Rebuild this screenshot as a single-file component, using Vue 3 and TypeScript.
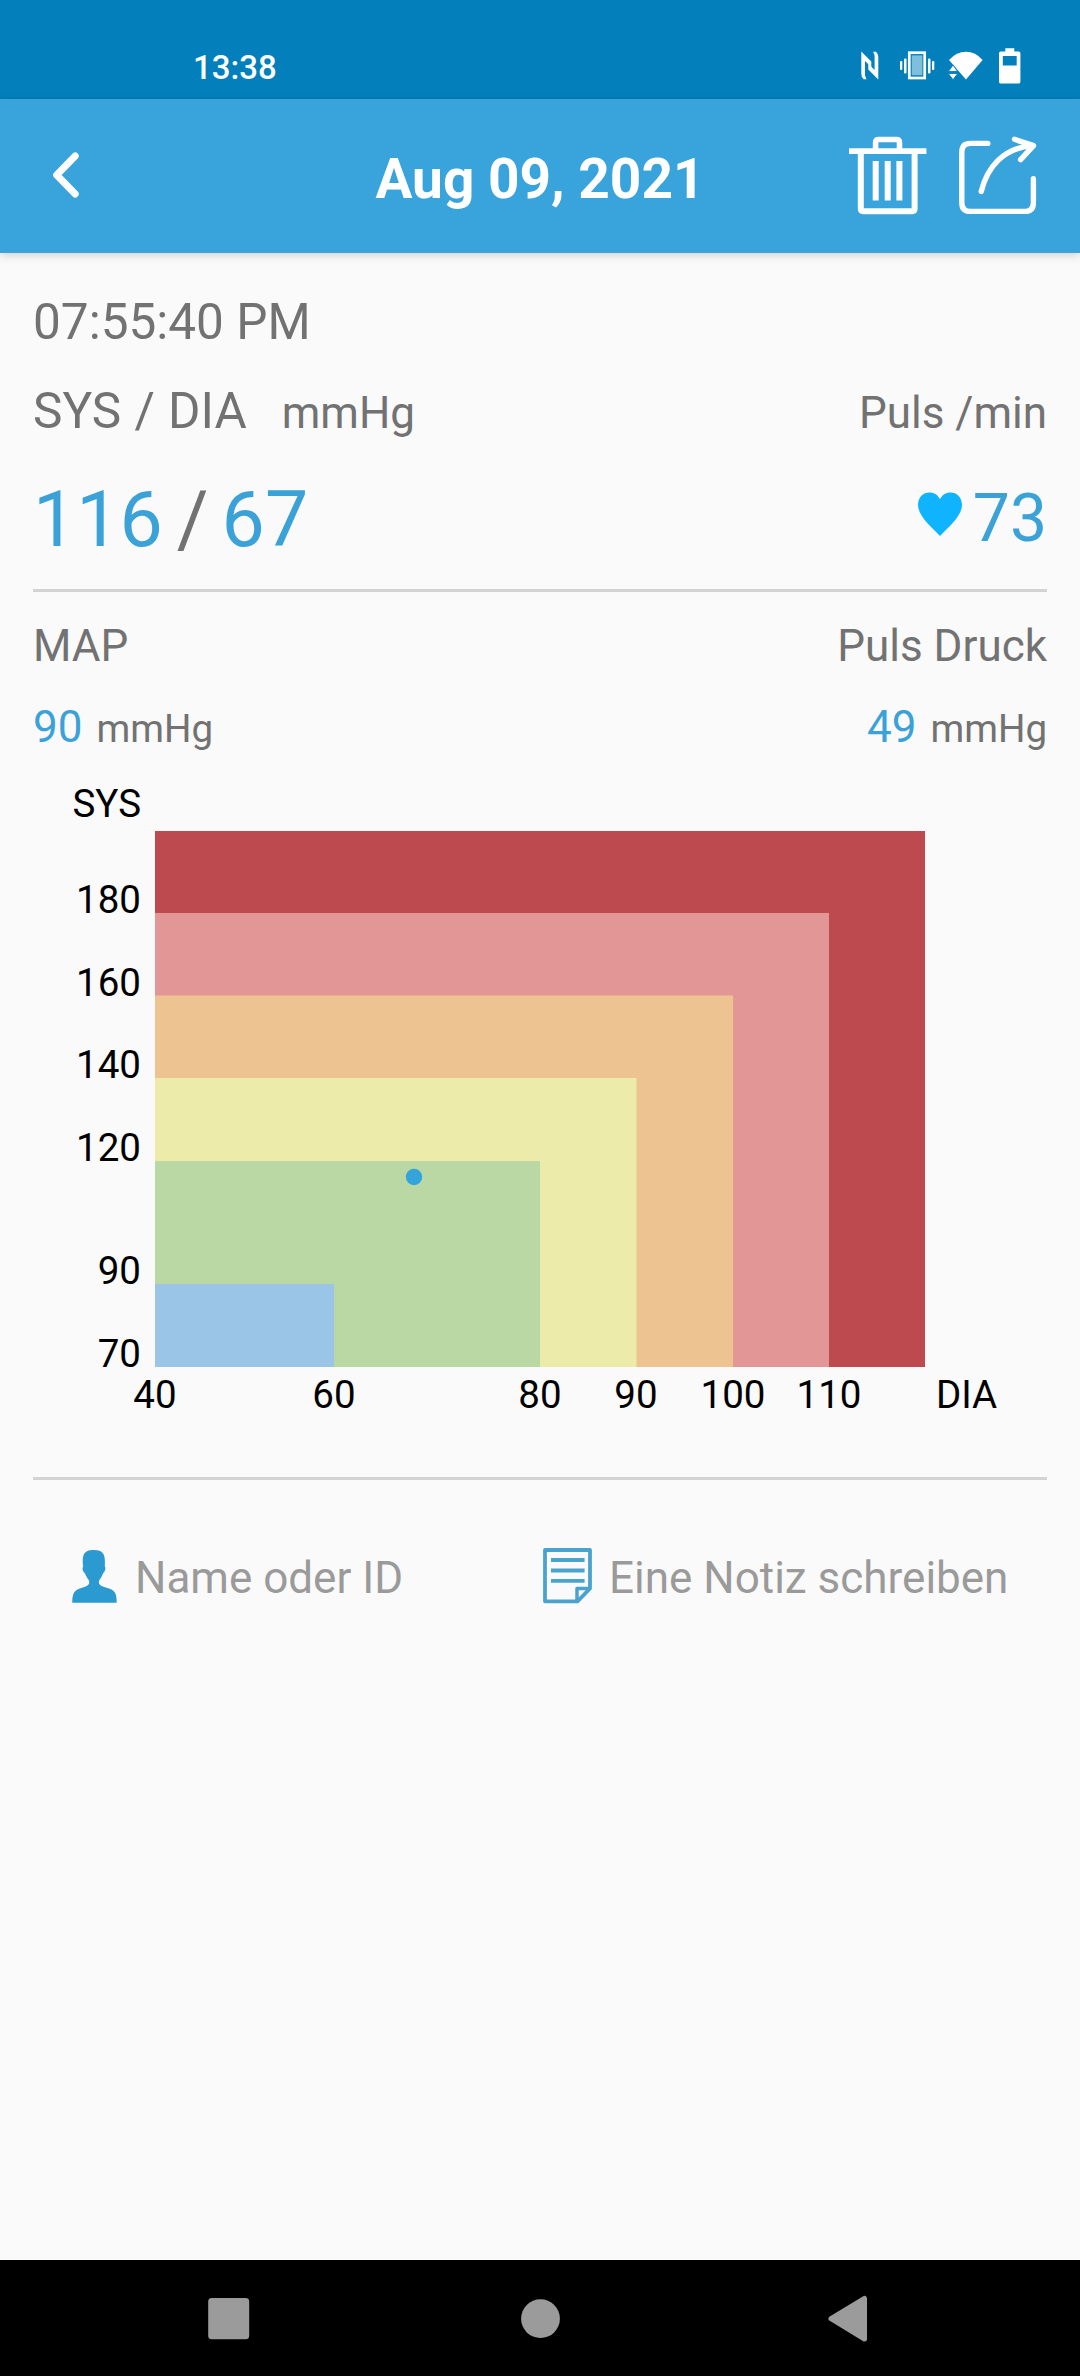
<script setup lang="ts">
interface Zone {
  sys: number
  dia: number
  color: string
}
interface Tick {
  label: string
  at: number
}

/* Plot frame in page pixels */
const left = 155
const bottom = 1367

/* Upper-right corner of every blood pressure zone, largest first */
const zones: Zone[] = [
  { sys: 831, dia: 925, color: '#bc4a4e' },
  { sys: 913, dia: 829, color: '#e39696' },
  { sys: 995.5, dia: 733, color: '#eec392' },
  { sys: 1078, dia: 636.5, color: '#ecebaa' },
  { sys: 1161, dia: 540, color: '#bad8a4' },
  { sys: 1284, dia: 334, color: '#9bc5e6' },
]

const sysTicks: Tick[] = [
  { label: 'SYS', at: 817 },
  { label: '180', at: 913 },
  { label: '160', at: 996 },
  { label: '140', at: 1078 },
  { label: '120', at: 1161 },
  { label: '90', at: 1284 },
  { label: '70', at: 1367 },
]

const diaTicks: Tick[] = [
  { label: '40', at: 155 },
  { label: '60', at: 334 },
  { label: '80', at: 540 },
  { label: '90', at: 636 },
  { label: '100', at: 733 },
  { label: '110', at: 829 },
]
</script>

<template>
  <div class="screen">
    <div class="status">
      <span class="clock">13:38</span>
      <svg class="status-icons" width="166" height="40" viewBox="858 46 166 40" fill="#fff">
        <path d="M861.3 51.500L871.300 61.500V67.300L865 61V75.500L866.500 79.200H863.600Q861.300 77 861.300 74Z" />
        <path d="M878.300 79.500L868.300 69.500V63.700L874.600 70V55.500L873.100 51.800H876Q878.300 54 878.300 57Z" />
        <rect x="909.3" y="52.7" width="15.4" height="25.3" fill="none" stroke="#fff" stroke-width="2.7" />
        <rect x="911.8" y="55.4" width="10.6" height="19.8" fill="#80bfdc" />
        <rect x="904" y="58.5" width="2.5" height="15" rx="1" />
        <rect x="900" y="61" width="2.3" height="9" rx="1" />
        <rect x="928" y="58.5" width="2.5" height="15" rx="1" />
        <rect x="932" y="61" width="2.3" height="9" rx="1" />
        <path d="M949 60Q956.5 51.8 966 51.8T982.6 60L966 79.5Z" />
        <path d="M948.2 71.6L953 65L957.8 71.6ZM948.2 73.4H957.8L953 79.8Z" stroke="#0380bb" stroke-width="1" />
        <path d="M1005.3 48.2h9v3.2h4.2q1.9 0 1.9 1.9v28.4q0 1.9-1.9 1.9h-17.6q-1.9 0-1.9-1.9v-28.4q0-1.9 1.9-1.9h4.4ZM1002.8 56v9.4h13.9v-9.4Z" fill-rule="evenodd" />
      </svg>
    </div>

    <header class="bar">
      <svg class="back" width="32" height="52" viewBox="50 149 32 52" fill="none" stroke="#fff" stroke-width="7" stroke-linecap="round" stroke-linejoin="round">
        <path d="M75.2 156L56.7 175L75.2 194" />
      </svg>
      <h1 class="title">Aug 09, 2021</h1>
      <svg class="actions" width="196" height="84" viewBox="845 133 196 84" fill="none" stroke="#fff">
        <path d="M875.6 149V142.6Q875.6 139.5 878.7 139.5H896.4Q899.5 139.5 899.5 142.6V149" stroke-width="5.6" />
        <path d="M849 151.2H926.4" stroke-width="5.8" />
        <path d="M860.8 153V208.8Q860.8 211.2 863.2 211.2H912.2Q914.6 211.2 914.6 208.8V153" stroke-width="6" />
        <path d="M875.7 161V200.5M887.7 161V200.5M899.4 161V200.5" stroke-width="6" />
        <g stroke-width="5.4" stroke-linecap="round" stroke-linejoin="round">
          <path d="M987.8 143.4H970.5Q961.8 143.4 961.8 152.1V202.7Q961.8 211.4 970.5 211.4H1024.7Q1033.4 211.4 1033.4 202.7V178.8" />
          <path d="M981.2 191.5C987 168 1003 147.5 1033 145.5" />
          <path d="M1014.5 139.3L1033.5 145.6L1020.6 159.6" />
        </g>
      </svg>
    </header>

    <main class="content">
      <section class="reading">
        <div class="row large time">07:55:40 PM</div>
        <div class="row labels">
          <div class="large names">SYS / DIA<span class="unit">mmHg</span></div>
          <div class="medium">Puls /min</div>
        </div>
        <div class="row values">
          <div class="pressure"><b>116</b><i>/</i><b>67</b></div>
          <div class="pulse">
            <svg class="heart" width="46" height="46" viewBox="0 0 46 46" fill="#10b4fe">
              <path d="M23 45C17 38 1 26 1 14C1 6 6.500 1.500 12.300 1.500C17.500 1.500 21 4 23 8.200C25 4 28.500 1.500 33.700 1.500C39.500 1.500 45 6 45 14C45 26 29 38 23 45Z" />
            </svg>
            <b>73</b>
          </div>
        </div>
      </section>
      <div class="rule"></div>

      <section class="derived">
        <div class="row medium">
          <span>MAP</span>
          <span>Puls Druck</span>
        </div>
        <div class="row medium second">
          <span><b>90</b><small>mmHg</small></span>
          <span><b>49</b><small>mmHg</small></span>
        </div>
      </section>

      <svg class="chart" width="1080" height="724" viewBox="0 753 1080 724">
        <rect v-for="z in zones" :key="z.color" :x="left" :y="z.sys" :width="z.dia - left" :height="bottom - z.sys" :fill="z.color" />
        <text v-for="t in sysTicks" :key="'s' + t.label" x="141" :y="t.at" text-anchor="end">{{ t.label }}</text>
        <text v-for="t in diaTicks" :key="'d' + t.label" :x="t.at" y="1408" text-anchor="middle">{{ t.label }}</text>
        <text x="936" y="1408">DIA</text>
        <circle cx="414" cy="1177" r="8.200" fill="#35a3dc" />
      </svg>
      <div class="rule"></div>

      <section class="fields">
        <div class="field">
          <svg width="46" height="56" viewBox="72 1548 46 56" fill="#2a9ad0">
            <path d="M72.300 1602.700C72.300 1596 73 1591.500 78 1589.200C83 1587 89.500 1586.500 89.300 1582C89.200 1579.500 86 1577 85 1573.500C82.300 1571 82 1567.500 83.200 1566.500C82 1556 83 1550 93.800 1550C104.500 1550 105.500 1556 104.800 1566.500C106 1567.500 105.500 1571 103 1573.500C102 1577 99 1579.500 98.800 1582C98.600 1586.500 106 1587 111 1589.200C116 1591.500 116.700 1596 116.700 1602.700Z" />
          </svg>
          <span>Name oder ID</span>
        </div>
        <div class="field note">
          <svg width="49" height="56" viewBox="543 1548 49 56" fill="none" stroke="#4aa3cd" stroke-linejoin="round">
            <path d="M545 1550H590V1588.500L577.500 1601.300H545Z" stroke-width="3.800" />
            <path d="M577 1600.500V1588.500H589.500" stroke-width="3.500" />
            <path d="M551 1560H584.600M551 1570.500H584.600M551 1580.800H584.600" stroke-width="3.800" />
          </svg>
          <span>Eine Notiz schreiben</span>
        </div>
      </section>
    </main>

    <nav class="nav">
      <svg width="1080" height="116" viewBox="0 2260 1080 116" fill="#9b9b9b">
        <rect x="208.200" y="2298" width="41" height="41.300" rx="3.500" />
        <circle cx="540.500" cy="2318.700" r="19.400" />
        <path d="M831 2318.700L864.500 2298.500V2339Z" stroke="#9b9b9b" stroke-width="5" stroke-linejoin="round" />
      </svg>
    </nav>
  </div>
</template>

<style>
body {
  margin: 0;
}
</style>

<style scoped>
.screen {
  width: 1080px;
  height: 2376px;
  display: flex;
  flex-direction: column;
  overflow: hidden;
  background: #fafafa;
  color: #727272;
  font-family: Roboto, "Noto Sans", sans-serif;
}
.screen svg {
  display: block;
  flex: none;
}
.screen b {
  font-weight: 400;
  color: #3ba2d8;
}
.status {
  height: 99px;
  box-sizing: border-box;
  padding: 46px 56px 0 193px;
  display: flex;
  justify-content: space-between;
  background: #0380bb;
}
.clock {
  color: #fff;
  font-size: 33px;
  font-weight: 500;
  line-height: 44px;
}
.bar {
  height: 154px;
  display: grid;
  grid-template-columns: 235px 1fr 235px;
  align-items: start;
  background: #39a3dc;
  box-shadow: 0 2px 9px rgba(0, 0, 0, 0.18);
}
.back {
  margin: 50px 0 0 50px;
}
.title {
  margin: 47px 0 0;
  color: #fff;
  font-size: 55px;
  line-height: 66px;
  font-weight: 700;
  text-align: center;
  white-space: nowrap;
}
.actions {
  margin-top: 34px;
}
.content {
  flex: 1;
  min-height: 0;
}
.reading {
  height: 336px;
  box-sizing: border-box;
  padding: 40px 33px 0;
}
.row {
  display: flex;
  justify-content: space-between;
  align-items: baseline;
  white-space: pre;
}
.large {
  font-size: 49.5px;
  line-height: 58px;
}
.medium {
  font-size: 44px;
  line-height: 52px;
}
.labels {
  margin-top: 31px;
  height: 58px;
}
.names {
  word-spacing: 1px;
}
.unit {
  margin-left: 35px;
  font-size: 44px;
}
.values {
  margin-top: 35px;
  align-items: flex-start;
}
.pressure {
  font-size: 77px;
  line-height: 90px;
}
.pressure i {
  font-style: normal;
  margin: 0 13px 0 14px;
}
.pulse {
  display: flex;
  margin-top: 4px;
  font-size: 66px;
  line-height: 80px;
}
.heart {
  margin: 12px 10px 0 0;
}
.rule {
  height: 3px;
  margin: 0 33px;
  background: #d3d3d3;
}
.derived {
  height: 161px;
  box-sizing: border-box;
  padding: 28px 33px 0;
}
.second {
  margin-top: 29px;
}
.second small {
  margin-left: 14px;
  font-size: 38.5px;
}
.chart text {
  font-size: 38.5px;
  fill: #000;
}
.fields {
  display: flex;
  padding: 68px 0 0 72px;
  font-size: 44px;
  line-height: 52px;
  color: #9a9a9a;
}
.field {
  display: flex;
  gap: 17px;
  width: 471px;
  white-space: nowrap;
}
.field span {
  margin-top: 4px;
}
.nav {
  height: 116px;
  background: #000;
}
</style>
